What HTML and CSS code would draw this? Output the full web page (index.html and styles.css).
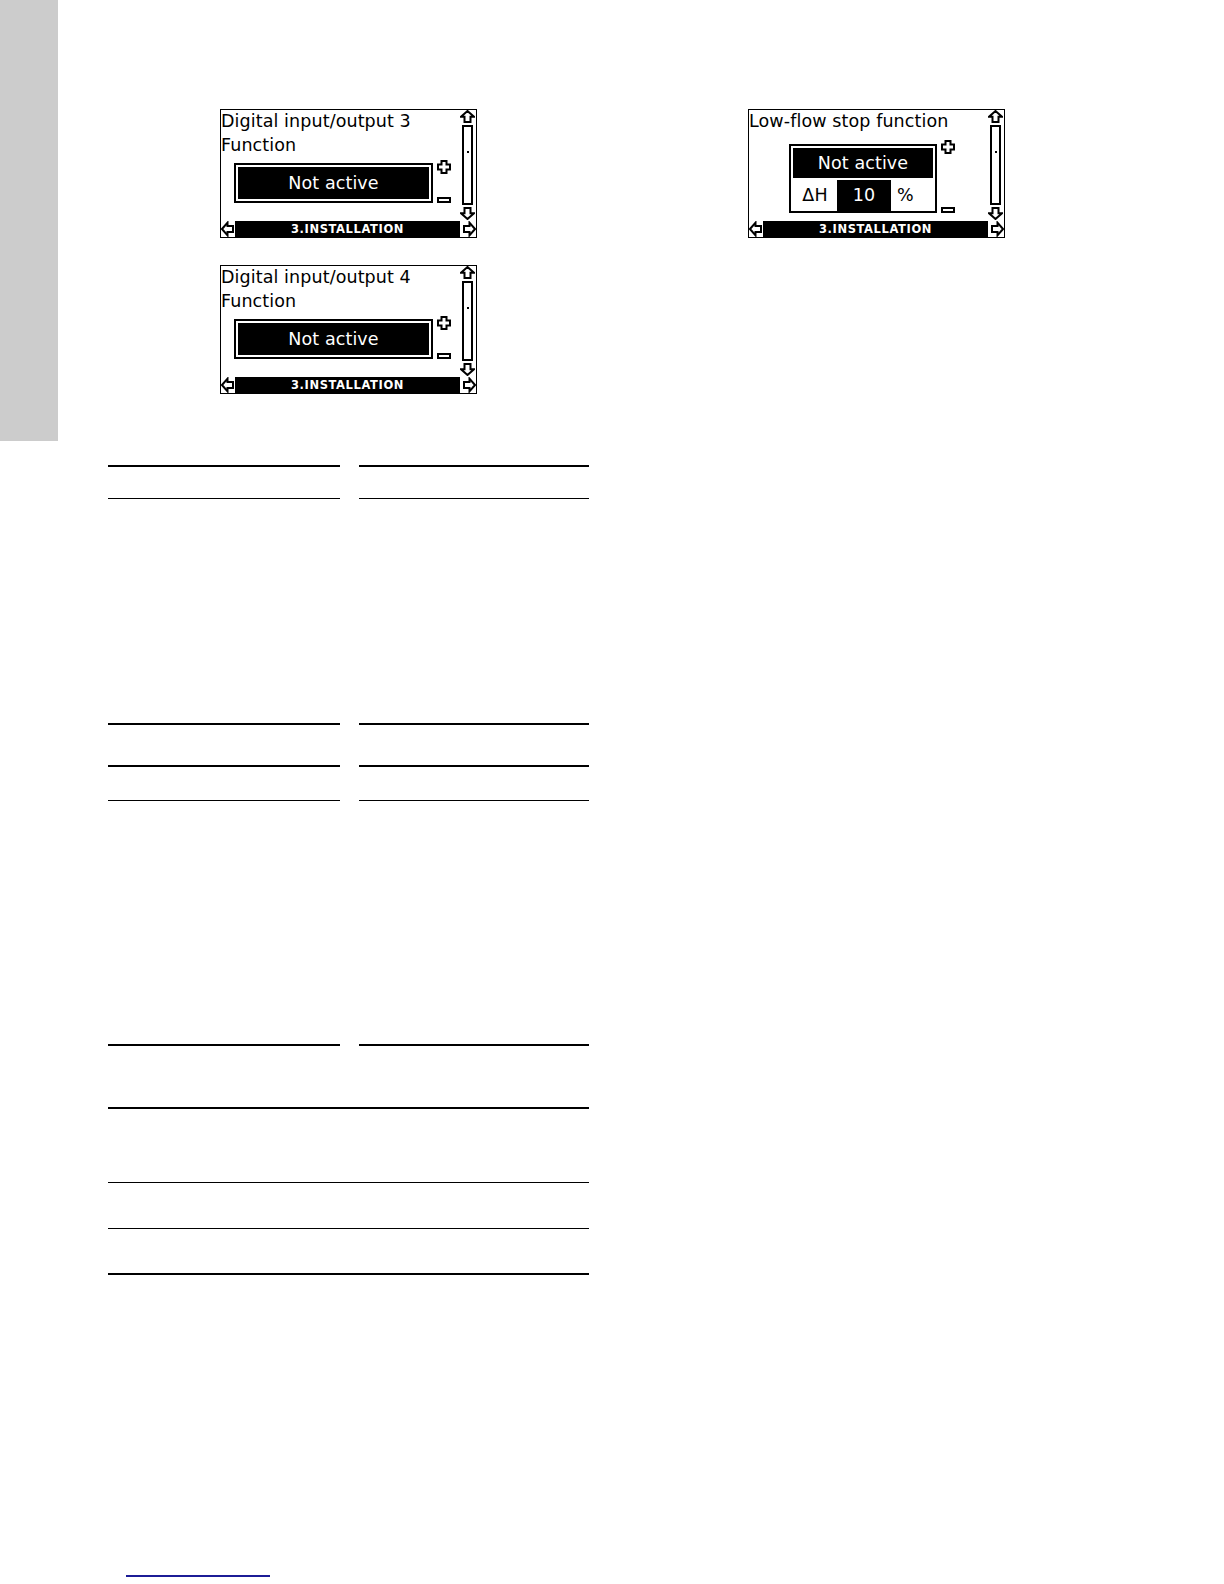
FILE: index.html
```html
<!DOCTYPE html>
<html lang="en">
<head>
<meta charset="utf-8">
<title>Installation menu</title>
<link rel="stylesheet" href="styles.css">
</head>
<body>
<div class="page">
  <div class="tab"></div>
  <main class="content">
    <div class="cols">
      <section class="col col-left">
        <div class="lcd">
          <div class="lcd-main">
            <div class="lcd-title">Digital input/output 3<br>Function</div>
            <div class="valrow">
              <div class="valbox"><div class="valfill">Not active</div></div>
              <div class="pm">
                <svg class="ico-plus" viewBox="0 0 14 14"><polygon points="4.5,1 9.5,1 9.5,4.5 13,4.5 13,9.5 9.5,9.5 9.5,13 4.5,13 4.5,9.5 1,9.5 1,4.5 4.5,4.5"/></svg>
                <svg class="ico-minus" viewBox="0 0 14 6"><rect x="1" y="1" width="12" height="4"/></svg>
              </div>
            </div>
          </div>
          <div class="lcd-scroll">
            <svg class="ico-arrow" viewBox="0 0 15 13"><polygon points="7.5,1 14,6.75 10.5,6.75 10.5,12 4.5,12 4.5,6.75 1,6.75"/></svg>
            <div class="track"><span class="dot"></span></div>
            <svg class="ico-arrow" viewBox="0 0 15 13"><polygon points="7.5,12 14,6.25 10.5,6.25 10.5,1 4.5,1 4.5,6.25 1,6.25"/></svg>
          </div>
          <div class="lcd-foot">
            <svg class="ico-side" viewBox="0 0 13 15"><polygon points="1,7.5 6.5,1.2 6.5,4.5 12,4.5 12,10.5 6.5,10.5 6.5,13.8"/></svg>
            <div class="footbar">3.INSTALLATION</div>
            <svg class="ico-side ico-right" viewBox="0 0 15 15"><polygon points="14,7.5 8.5,1.2 8.5,4.5 3,4.5 3,10.5 8.5,10.5 8.5,13.8"/></svg>
          </div>
        </div>

        <div class="lcd">
          <div class="lcd-main">
            <div class="lcd-title">Digital input/output 4<br>Function</div>
            <div class="valrow">
              <div class="valbox"><div class="valfill">Not active</div></div>
              <div class="pm">
                <svg class="ico-plus" viewBox="0 0 14 14"><polygon points="4.5,1 9.5,1 9.5,4.5 13,4.5 13,9.5 9.5,9.5 9.5,13 4.5,13 4.5,9.5 1,9.5 1,4.5 4.5,4.5"/></svg>
                <svg class="ico-minus" viewBox="0 0 14 6"><rect x="1" y="1" width="12" height="4"/></svg>
              </div>
            </div>
          </div>
          <div class="lcd-scroll">
            <svg class="ico-arrow" viewBox="0 0 15 13"><polygon points="7.5,1 14,6.75 10.5,6.75 10.5,12 4.5,12 4.5,6.75 1,6.75"/></svg>
            <div class="track"><span class="dot"></span></div>
            <svg class="ico-arrow" viewBox="0 0 15 13"><polygon points="7.5,12 14,6.25 10.5,6.25 10.5,1 4.5,1 4.5,6.25 1,6.25"/></svg>
          </div>
          <div class="lcd-foot">
            <svg class="ico-side" viewBox="0 0 13 15"><polygon points="1,7.5 6.5,1.2 6.5,4.5 12,4.5 12,10.5 6.5,10.5 6.5,13.8"/></svg>
            <div class="footbar">3.INSTALLATION</div>
            <svg class="ico-side ico-right" viewBox="0 0 15 15"><polygon points="14,7.5 8.5,1.2 8.5,4.5 3,4.5 3,10.5 8.5,10.5 8.5,13.8"/></svg>
          </div>
        </div>

        <div class="tables">
          <div class="split t1">
            <div class="tcol"><div class="th"></div><div class="tb"></div></div>
            <div class="tcol"><div class="th"></div><div class="tb"></div></div>
          </div>
          <div class="split t2">
            <div class="tcol"><div class="th"></div><div class="tb"></div></div>
            <div class="tcol"><div class="th"></div><div class="tb"></div></div>
          </div>
          <div class="full t3">
            <div class="tr r1"></div>
            <div class="tr r2"></div>
            <div class="tr r3"></div>
          </div>
        </div>
      </section>

      <section class="col col-right">
        <div class="lcd">
          <div class="lcd-main">
            <div class="lcd-title">Low-flow stop function</div>
            <div class="lfrow">
              <div class="lfbox">
                <div class="lfbar">Not active</div>
                <div class="lfline">
                  <span class="dh">ΔH</span>
                  <span class="num">10</span>
                  <span class="pct">%</span>
                </div>
              </div>
              <div class="pm">
                <svg class="ico-plus" viewBox="0 0 14 14"><polygon points="4.5,1 9.5,1 9.5,4.5 13,4.5 13,9.5 9.5,9.5 9.5,13 4.5,13 4.5,9.5 1,9.5 1,4.5 4.5,4.5"/></svg>
                <svg class="ico-minus" viewBox="0 0 14 6"><rect x="1" y="1" width="12" height="4"/></svg>
              </div>
            </div>
          </div>
          <div class="lcd-scroll">
            <svg class="ico-arrow" viewBox="0 0 15 13"><polygon points="7.5,1 14,6.75 10.5,6.75 10.5,12 4.5,12 4.5,6.75 1,6.75"/></svg>
            <div class="track"><span class="dot"></span></div>
            <svg class="ico-arrow" viewBox="0 0 15 13"><polygon points="7.5,12 14,6.25 10.5,6.25 10.5,1 4.5,1 4.5,6.25 1,6.25"/></svg>
          </div>
          <div class="lcd-foot">
            <svg class="ico-side" viewBox="0 0 13 15"><polygon points="1,7.5 6.5,1.2 6.5,4.5 12,4.5 12,10.5 6.5,10.5 6.5,13.8"/></svg>
            <div class="footbar">3.INSTALLATION</div>
            <svg class="ico-side ico-right" viewBox="0 0 15 15"><polygon points="14,7.5 8.5,1.2 8.5,4.5 3,4.5 3,10.5 8.5,10.5 8.5,13.8"/></svg>
          </div>
        </div>
      </section>
    </div>
    <div class="footlink"></div>
  </main>
</div>
</body>
</html>
```

FILE: styles.css
```css
html, body {
  margin: 0;
  padding: 0;
  background: #fff;
}
body {
  width: 1224px;
  min-height: 1584px;
  font-family: "DejaVu Sans", "Liberation Sans", sans-serif;
  color: #000;
}
.page {
  display: flex;
  align-items: flex-start;
}
.tab {
  flex: none;
  width: 58px;
  height: 441px;
  background: #cccccc;
}
.content {
  flex: none;
  width: 1166px;
  padding-left: 50px;
  box-sizing: border-box;
}
.cols {
  display: grid;
  grid-template-columns: 481px 481px;
  column-gap: 47px;
}
.col {
  display: flex;
  flex-direction: column;
  align-items: center;
  padding-top: 109px;
}

/* LCD display */
.lcd {
  width: 257px;
  height: 129px;
  box-sizing: border-box;
  border: 1px solid #000;
  display: grid;
  grid-template-columns: 238px 17px;
  grid-template-rows: 110px 17px;
  grid-template-areas: "main scroll" "foot foot";
  font-size: 17.5px;
  letter-spacing: 0.1px;
  margin-bottom: 27px;
  overflow: hidden;
}
.lcd-main {
  grid-area: main;
  display: flex;
  flex-direction: column;
}
.lcd-title {
  line-height: 23.5px;
  white-space: nowrap;
}
.valrow {
  display: flex;
  height: 43px;
  margin-top: 3px;
  padding-left: 13px;
}
.valbox {
  width: 199px;
  height: 40px;
  margin-top: 3px;
  box-sizing: border-box;
  border: 2px solid #000;
  padding: 2px;
}
.valfill {
  height: 100%;
  background: #000;
  color: #fff;
  display: flex;
  align-items: center;
  justify-content: center;
}
.pm {
  width: 14px;
  margin-left: 4px;
  display: flex;
  flex-direction: column;
  justify-content: space-between;
}
.ico-plus {
  width: 14px;
  height: 14px;
  display: block;
}
.ico-minus {
  width: 14px;
  height: 6px;
  display: block;
}
.ico-plus polygon, .ico-minus rect, .ico-arrow polygon, .ico-side polygon {
  fill: #fff;
  stroke: #000;
  stroke-width: 2;
  stroke-linejoin: miter;
}
.lcd-scroll {
  grid-area: scroll;
  display: flex;
  flex-direction: column;
  align-items: center;
}
.ico-arrow {
  width: 15px;
  height: 13px;
  display: block;
  flex: none;
}
.track {
  flex: 1;
  width: 11px;
  margin: 2px 0;
  box-sizing: border-box;
  border: 2px solid #000;
  display: flex;
  justify-content: center;
  padding-top: 24px;
}
.dot {
  width: 2px;
  height: 2px;
  background: #000;
}
.lcd-foot {
  grid-area: foot;
  display: flex;
  align-items: stretch;
  margin-top: 1px;
}
.ico-side {
  width: 13px;
  height: 16px;
  flex: none;
  display: block;
}
.ico-side.ico-right {
  width: 15px;
}
.footbar {
  flex: 1;
  margin: 0 1px;
  background: #000;
  color: #fff;
  font-size: 11.5px;
  font-weight: bold;
  letter-spacing: 0.6px;
  display: flex;
  align-items: center;
  justify-content: center;
}

/* Low-flow panel */
.lfrow {
  display: flex;
  height: 73px;
  margin-top: 6px;
  padding-left: 40px;
}
.lfbox {
  width: 148px;
  height: 69px;
  margin-top: 4px;
  box-sizing: border-box;
  border: 2px solid #000;
  padding: 2px 2px 0 2px;
  display: flex;
  flex-direction: column;
}
.lfbar {
  height: 30px;
  background: #000;
  color: #fff;
  display: flex;
  align-items: center;
  justify-content: center;
  flex: none;
}
.lfline {
  flex: 1;
  display: flex;
  margin-top: 2px;
}
.dh {
  width: 44px;
  display: flex;
  align-items: center;
  justify-content: center;
}
.num {
  width: 54px;
  background: #000;
  color: #fff;
  display: flex;
  align-items: center;
  justify-content: center;
}
.pct {
  flex: 1;
  display: flex;
  align-items: center;
  padding-left: 6px;
}

/* Empty tables */
.tables {
  align-self: stretch;
  margin-top: 44px;
}
.split {
  display: grid;
  grid-template-columns: 232px 230px;
  column-gap: 19px;
}
.tcol {
  border-top: 2px solid #000;
  border-bottom: 2px solid #000;
}
.th {
  border-bottom: 1px solid #000;
}
.t1 .th { height: 31px; }
.t1 .tb { height: 224px; }
.t2 { margin-top: 40px; }
.t2 .th { height: 33px; }
.t2 .tb { height: 243px; }
.t3 {
  margin-top: 61px;
  border-top: 2px solid #000;
  border-bottom: 2px solid #000;
}
.tr + .tr { border-top: 1px solid #000; }
.r1 { height: 73px; }
.r2 { height: 45px; }
.r3 { height: 44px; }

.footlink {
  width: 144px;
  height: 2px;
  margin-left: 18px;
  margin-top: 300px;
  background: #1c1c96;
}
```
